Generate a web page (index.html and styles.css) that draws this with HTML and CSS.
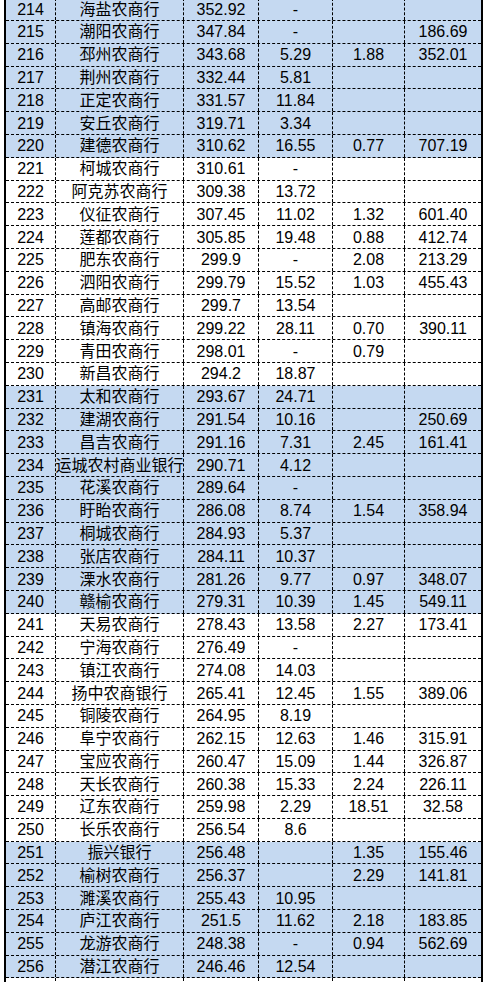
FILE: index.html
```html
<!DOCTYPE html>
<html lang="zh-CN">
<head>
<meta charset="utf-8">
<title>农商行排名</title>
<link rel="stylesheet" href="styles.css">
</head>
<body>
<div class="sheet">
  <div class="row blue"><div class="c">214</div><div class="c">海盐农商行</div><div class="c">352.92</div><div class="c">-</div><div class="c"></div><div class="c"></div></div>
  <div class="row blue"><div class="c">215</div><div class="c">潮阳农商行</div><div class="c">347.84</div><div class="c">-</div><div class="c"></div><div class="c">186.69</div></div>
  <div class="row blue"><div class="c">216</div><div class="c">邳州农商行</div><div class="c">343.68</div><div class="c">5.29</div><div class="c">1.88</div><div class="c">352.01</div></div>
  <div class="row blue"><div class="c">217</div><div class="c">荆州农商行</div><div class="c">332.44</div><div class="c">5.81</div><div class="c"></div><div class="c"></div></div>
  <div class="row blue"><div class="c">218</div><div class="c">正定农商行</div><div class="c">331.57</div><div class="c">11.84</div><div class="c"></div><div class="c"></div></div>
  <div class="row blue"><div class="c">219</div><div class="c">安丘农商行</div><div class="c">319.71</div><div class="c">3.34</div><div class="c"></div><div class="c"></div></div>
  <div class="row blue"><div class="c">220</div><div class="c">建德农商行</div><div class="c">310.62</div><div class="c">16.55</div><div class="c">0.77</div><div class="c">707.19</div></div>
  <div class="row"><div class="c">221</div><div class="c">柯城农商行</div><div class="c">310.61</div><div class="c">-</div><div class="c"></div><div class="c"></div></div>
  <div class="row"><div class="c">222</div><div class="c">阿克苏农商行</div><div class="c">309.38</div><div class="c">13.72</div><div class="c"></div><div class="c"></div></div>
  <div class="row"><div class="c">223</div><div class="c">仪征农商行</div><div class="c">307.45</div><div class="c">11.02</div><div class="c">1.32</div><div class="c">601.40</div></div>
  <div class="row"><div class="c">224</div><div class="c">莲都农商行</div><div class="c">305.85</div><div class="c">19.48</div><div class="c">0.88</div><div class="c">412.74</div></div>
  <div class="row"><div class="c">225</div><div class="c">肥东农商行</div><div class="c">299.9</div><div class="c">-</div><div class="c">2.08</div><div class="c">213.29</div></div>
  <div class="row"><div class="c">226</div><div class="c">泗阳农商行</div><div class="c">299.79</div><div class="c">15.52</div><div class="c">1.03</div><div class="c">455.43</div></div>
  <div class="row"><div class="c">227</div><div class="c">高邮农商行</div><div class="c">299.7</div><div class="c">13.54</div><div class="c"></div><div class="c"></div></div>
  <div class="row"><div class="c">228</div><div class="c">镇海农商行</div><div class="c">299.22</div><div class="c">28.11</div><div class="c">0.70</div><div class="c">390.11</div></div>
  <div class="row"><div class="c">229</div><div class="c">青田农商行</div><div class="c">298.01</div><div class="c">-</div><div class="c">0.79</div><div class="c"></div></div>
  <div class="row"><div class="c">230</div><div class="c">新昌农商行</div><div class="c">294.2</div><div class="c">18.87</div><div class="c"></div><div class="c"></div></div>
  <div class="row blue"><div class="c">231</div><div class="c">太和农商行</div><div class="c">293.67</div><div class="c">24.71</div><div class="c"></div><div class="c"></div></div>
  <div class="row blue"><div class="c">232</div><div class="c">建湖农商行</div><div class="c">291.54</div><div class="c">10.16</div><div class="c"></div><div class="c">250.69</div></div>
  <div class="row blue"><div class="c">233</div><div class="c">昌吉农商行</div><div class="c">291.16</div><div class="c">7.31</div><div class="c">2.45</div><div class="c">161.41</div></div>
  <div class="row blue"><div class="c">234</div><div class="c">运城农村商业银行</div><div class="c">290.71</div><div class="c">4.12</div><div class="c"></div><div class="c"></div></div>
  <div class="row blue"><div class="c">235</div><div class="c">花溪农商行</div><div class="c">289.64</div><div class="c">-</div><div class="c"></div><div class="c"></div></div>
  <div class="row blue"><div class="c">236</div><div class="c">盱眙农商行</div><div class="c">286.08</div><div class="c">8.74</div><div class="c">1.54</div><div class="c">358.94</div></div>
  <div class="row blue"><div class="c">237</div><div class="c">桐城农商行</div><div class="c">284.93</div><div class="c">5.37</div><div class="c"></div><div class="c"></div></div>
  <div class="row blue"><div class="c">238</div><div class="c">张店农商行</div><div class="c">284.11</div><div class="c">10.37</div><div class="c"></div><div class="c"></div></div>
  <div class="row blue"><div class="c">239</div><div class="c">溧水农商行</div><div class="c">281.26</div><div class="c">9.77</div><div class="c">0.97</div><div class="c">348.07</div></div>
  <div class="row blue"><div class="c">240</div><div class="c">赣榆农商行</div><div class="c">279.31</div><div class="c">10.39</div><div class="c">1.45</div><div class="c">549.11</div></div>
  <div class="row"><div class="c">241</div><div class="c">天易农商行</div><div class="c">278.43</div><div class="c">13.58</div><div class="c">2.27</div><div class="c">173.41</div></div>
  <div class="row"><div class="c">242</div><div class="c">宁海农商行</div><div class="c">276.49</div><div class="c">-</div><div class="c"></div><div class="c"></div></div>
  <div class="row"><div class="c">243</div><div class="c">镇江农商行</div><div class="c">274.08</div><div class="c">14.03</div><div class="c"></div><div class="c"></div></div>
  <div class="row"><div class="c">244</div><div class="c">扬中农商银行</div><div class="c">265.41</div><div class="c">12.45</div><div class="c">1.55</div><div class="c">389.06</div></div>
  <div class="row"><div class="c">245</div><div class="c">铜陵农商行</div><div class="c">264.95</div><div class="c">8.19</div><div class="c"></div><div class="c"></div></div>
  <div class="row"><div class="c">246</div><div class="c">阜宁农商行</div><div class="c">262.15</div><div class="c">12.63</div><div class="c">1.46</div><div class="c">315.91</div></div>
  <div class="row"><div class="c">247</div><div class="c">宝应农商行</div><div class="c">260.47</div><div class="c">15.09</div><div class="c">1.44</div><div class="c">326.87</div></div>
  <div class="row"><div class="c">248</div><div class="c">天长农商行</div><div class="c">260.38</div><div class="c">15.33</div><div class="c">2.24</div><div class="c">226.11</div></div>
  <div class="row"><div class="c">249</div><div class="c">辽东农商行</div><div class="c">259.98</div><div class="c">2.29</div><div class="c">18.51</div><div class="c">32.58</div></div>
  <div class="row"><div class="c">250</div><div class="c">长乐农商行</div><div class="c">256.54</div><div class="c">8.6</div><div class="c"></div><div class="c"></div></div>
  <div class="row blue"><div class="c">251</div><div class="c">振兴银行</div><div class="c">256.48</div><div class="c"></div><div class="c">1.35</div><div class="c">155.46</div></div>
  <div class="row blue"><div class="c">252</div><div class="c">榆树农商行</div><div class="c">256.37</div><div class="c"></div><div class="c">2.29</div><div class="c">141.81</div></div>
  <div class="row blue"><div class="c">253</div><div class="c">濉溪农商行</div><div class="c">255.43</div><div class="c">10.95</div><div class="c"></div><div class="c"></div></div>
  <div class="row blue"><div class="c">254</div><div class="c">庐江农商行</div><div class="c">251.5</div><div class="c">11.62</div><div class="c">2.18</div><div class="c">183.85</div></div>
  <div class="row blue"><div class="c">255</div><div class="c">龙游农商行</div><div class="c">248.38</div><div class="c">-</div><div class="c">0.94</div><div class="c">562.69</div></div>
  <div class="row blue"><div class="c">256</div><div class="c">潜江农商行</div><div class="c">246.46</div><div class="c">12.54</div><div class="c"></div><div class="c"></div></div>
  <div class="row"><div class="c"></div><div class="c"></div><div class="c"></div><div class="c"></div><div class="c"></div><div class="c"></div></div>
</div>
</body>
</html>
```
FILE: styles.css
```css
html, body {
  margin: 0;
  padding: 0;
  background: #ffffff;
}
body {
  font-family: "Liberation Sans", "Noto Sans CJK SC", sans-serif;
  font-size: 16px;
  color: #000000;
  overflow: hidden;
  height: 982px;
}
.sheet {
  box-sizing: border-box;
  width: 479px;
  margin: -1.8px 0 0 4px;
  border-left: 2px solid #000;
  border-right: 2px solid #000;
}
.row {
  box-sizing: border-box;
  display: grid;
  grid-template-columns: 50px 128px 75px 74px 72px 76px;
  height: 22.8px;
  border-bottom: 1px dashed #000;
  background: #ffffff;
}
.row.blue {
  background: #c5d9f1;
}
.c {
  box-sizing: border-box;
  display: flex;
  align-items: center;
  justify-content: center;
  white-space: nowrap;
  line-height: 1;
  border-right: 1px dashed #000;
  padding-top: 1px;
}
.c:last-child {
  border-right: none;
}
```
